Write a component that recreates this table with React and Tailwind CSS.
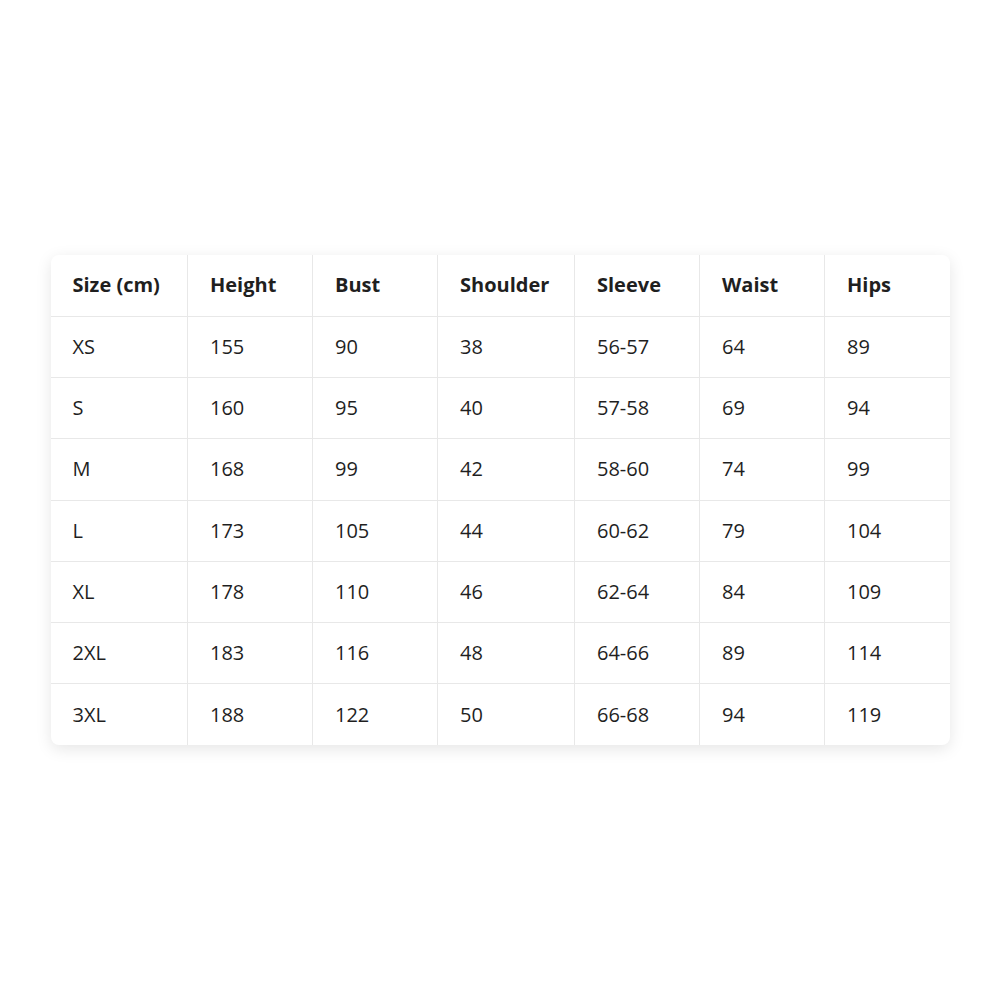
const headers = ['Size (cm)', 'Height', 'Bust', 'Shoulder', 'Sleeve', 'Waist', 'Hips'];
const widths = ['w-[137px]', 'w-[125px]', 'w-[125px]', 'w-[137px]', 'w-[125px]', 'w-[125px]', 'w-[125px]'];

const rows = [
    ['XS', '155', '90', '38', '56-57', '64', '89'],
    ['S', '160', '95', '40', '57-58', '69', '94'],
    ['M', '168', '99', '42', '58-60', '74', '99'],
    ['L', '173', '105', '44', '60-62', '79', '104'],
    ['XL', '178', '110', '46', '62-64', '84', '109'],
    ['2XL', '183', '116', '48', '64-66', '89', '114'],
    ['3XL', '188', '122', '50', '66-68', '94', '119'],
];

export default function App() {
    return (
        <div className="min-h-screen bg-white flex items-center justify-center" style={{ fontFamily: '"Open Sans", "Noto Sans", sans-serif' }}>
            <div className="w-[899px] bg-white rounded-lg overflow-hidden shadow-[0_4px_16px_rgba(0,0,0,0.1)]">
                <table className="w-full table-fixed border-collapse text-[20px] text-[#1f1f1f]">
                    <thead>
                        <tr className="h-[61.25px]">
                            {headers.map((h, i) => (
                                <th
                                    key={h}
                                    className={`${widths[i]} text-left font-bold pl-[22px] border-b border-[#e8e8e8] ${i > 0 ? 'border-l' : ''}`}
                                >
                                    {h}
                                </th>
                            ))}
                        </tr>
                    </thead>
                    <tbody>
                        {rows.map((row, r) => (
                            <tr key={row[0]} className="h-[61.25px]">
                                {row.map((cell, i) => (
                                    <td
                                        key={i}
                                        className={`pl-[22px] border-[#e8e8e8] ${r < rows.length - 1 ? 'border-b' : ''} ${i > 0 ? 'border-l' : ''}`}
                                    >
                                        {cell}
                                    </td>
                                ))}
                            </tr>
                        ))}
                    </tbody>
                </table>
            </div>
        </div>
    );
}
